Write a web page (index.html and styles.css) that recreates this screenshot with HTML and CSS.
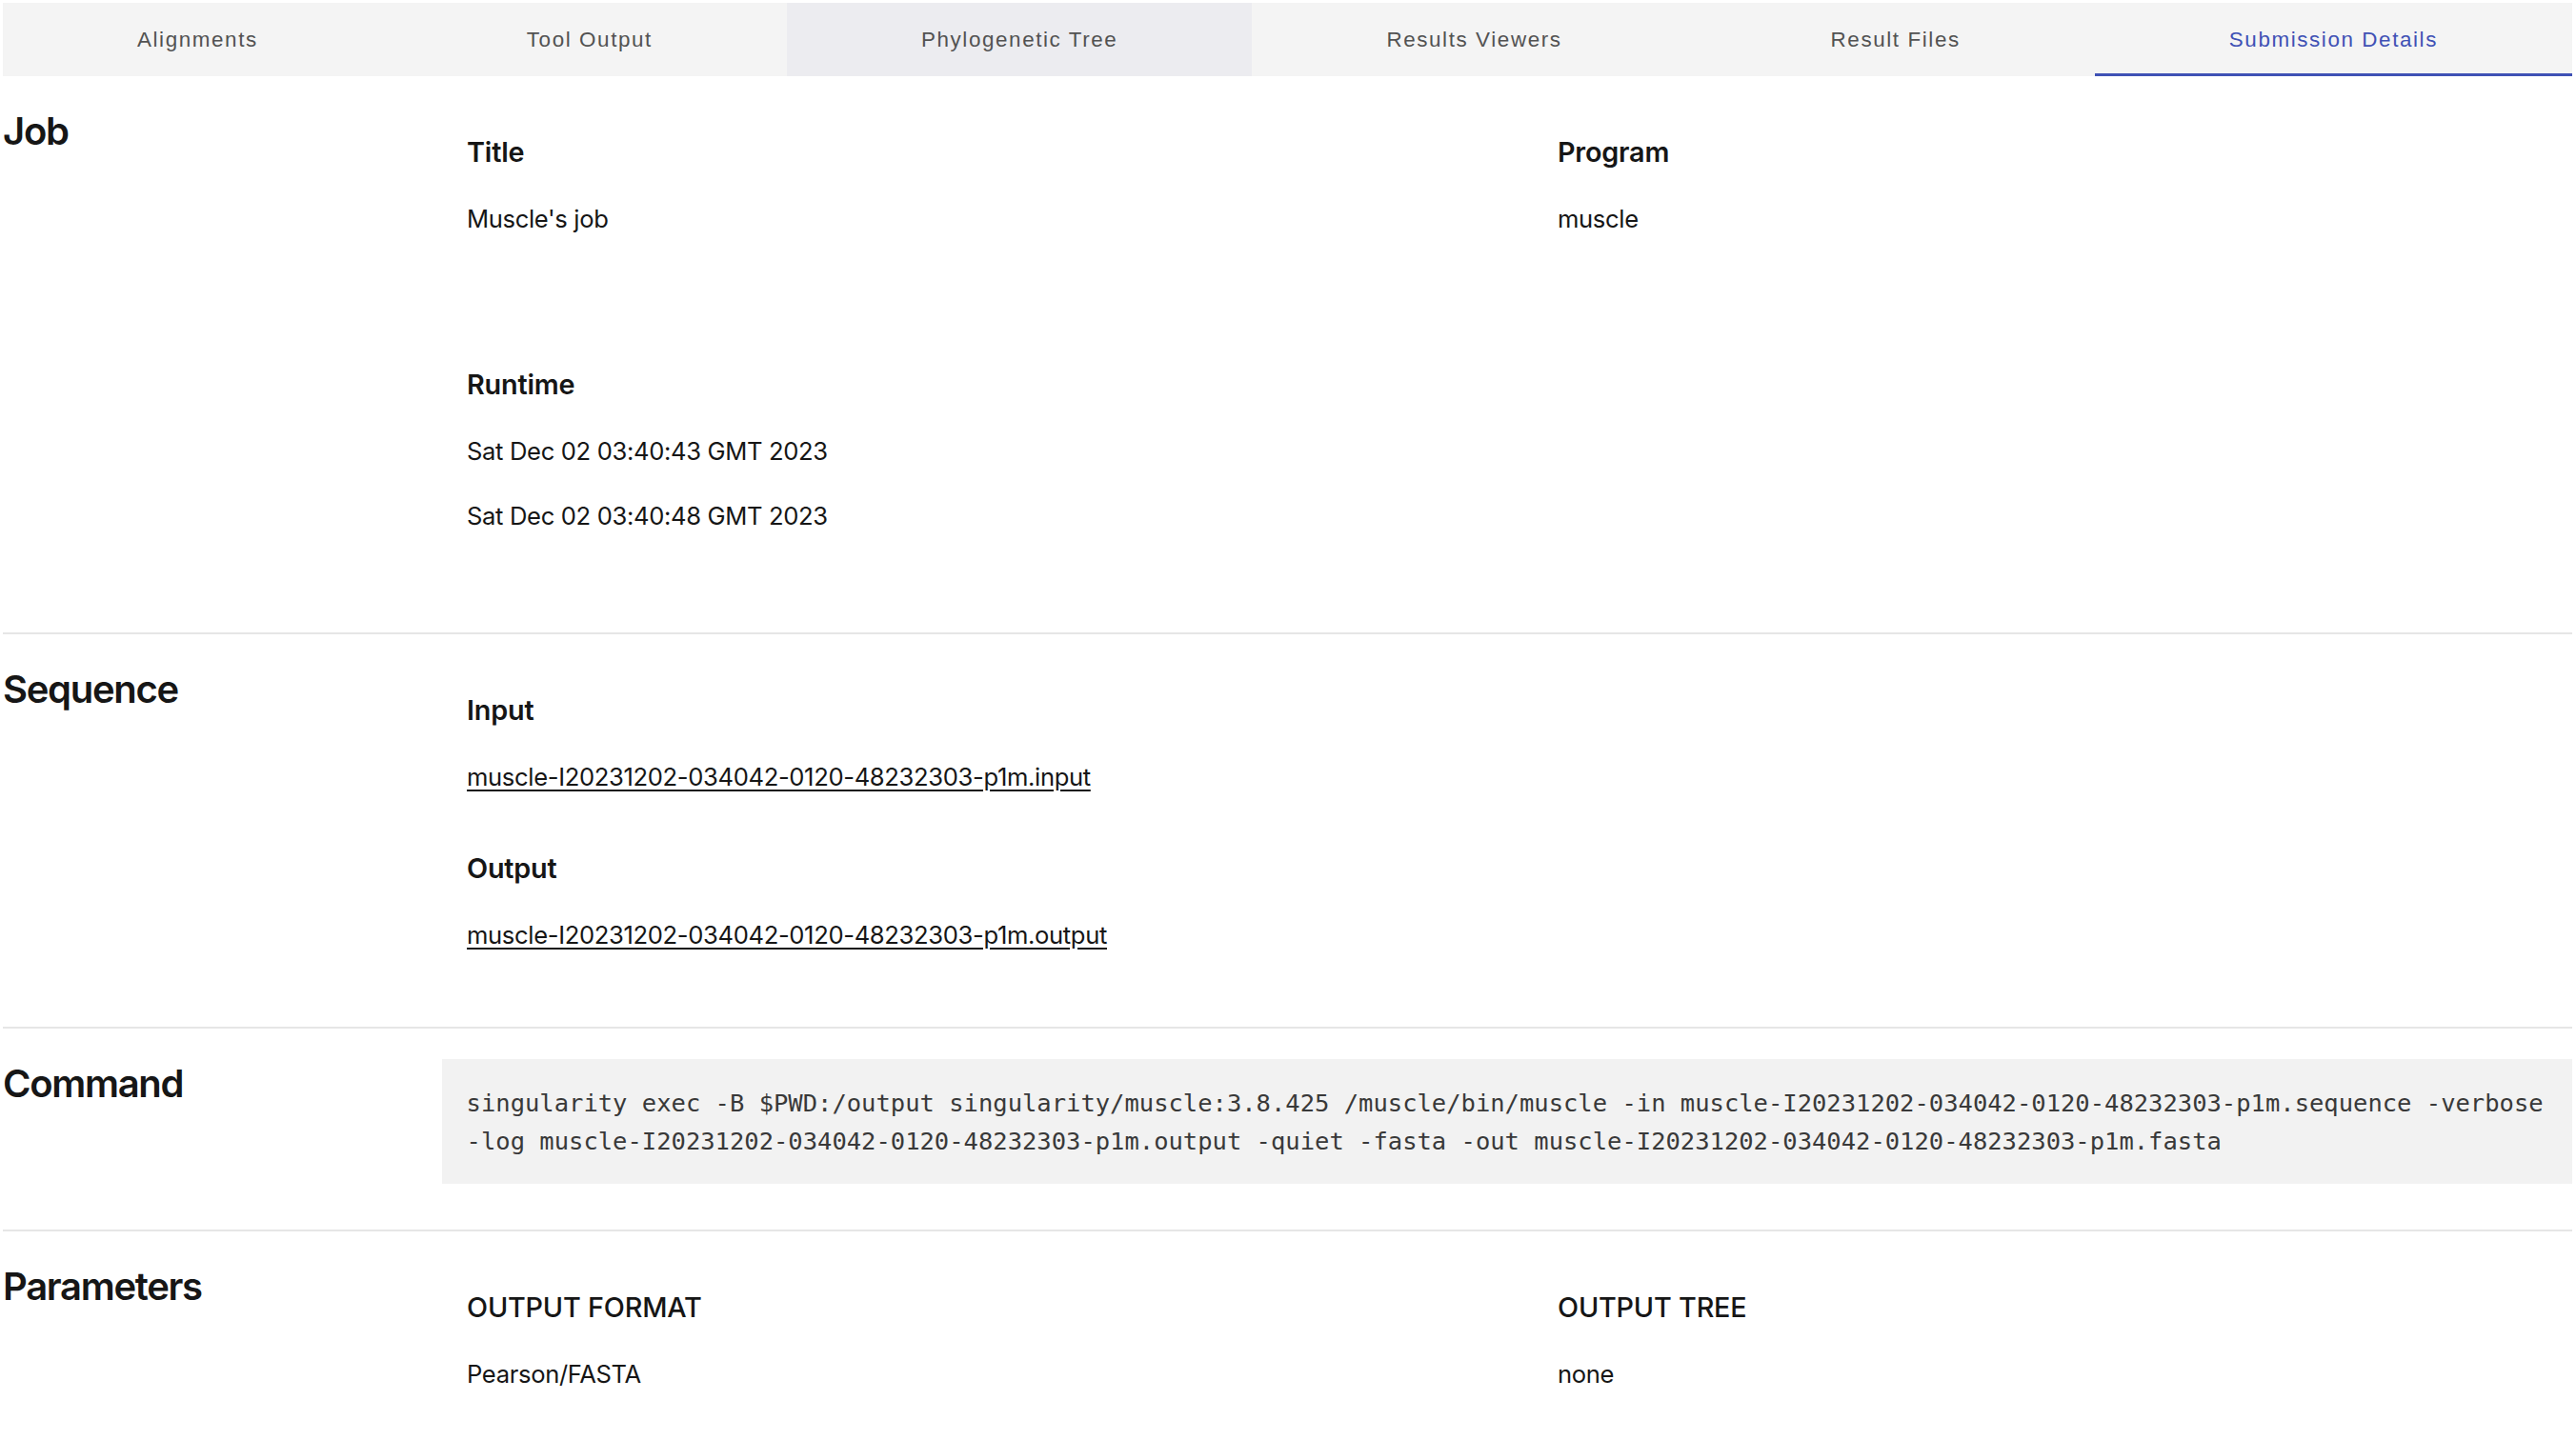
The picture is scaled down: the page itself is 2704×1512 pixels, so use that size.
FILE: index.html
```html
<!DOCTYPE html>
<html lang="en">
<head>
<meta charset="utf-8">
<title>Submission Details</title>
<link rel="stylesheet" href="styles.css">
</head>
<body>
<nav class="tabs">
  <div class="tab">Alignments</div>
  <div class="tab">Tool Output</div>
  <div class="tab tab--hover">Phylogenetic Tree</div>
  <div class="tab">Results Viewers</div>
  <div class="tab">Result Files</div>
  <div class="tab tab--active">Submission Details</div>
</nav>
<main class="details">
  <section class="section section--job">
    <h2 class="section-title">Job</h2>
    <div class="fields fields--job">
      <div class="field">
        <h3 class="field-label">Title</h3>
        <p class="field-value">Muscle's job</p>
      </div>
      <div class="field">
        <h3 class="field-label">Program</h3>
        <p class="field-value">muscle</p>
      </div>
      <div class="field">
        <h3 class="field-label">Runtime</h3>
        <p class="field-value">Sat Dec 02 03:40:43 GMT 2023</p>
        <p class="field-value">Sat Dec 02 03:40:48 GMT 2023</p>
      </div>
    </div>
  </section>
  <section class="section">
    <h2 class="section-title">Sequence</h2>
    <div class="fields">
      <div class="field field--first">
        <h3 class="field-label">Input</h3>
        <p class="field-value"><a class="file-link" href="#">muscle-I20231202-034042-0120-48232303-p1m.input</a></p>
      </div>
      <div class="field field--first">
        <h3 class="field-label">Output</h3>
        <p class="field-value"><a class="file-link" href="#">muscle-I20231202-034042-0120-48232303-p1m.output</a></p>
      </div>
    </div>
  </section>
  <section class="section">
    <h2 class="section-title">Command</h2>
    <pre class="command">singularity exec -B $PWD:/output singularity/muscle:3.8.425 /muscle/bin/muscle -in muscle-I20231202-034042-0120-48232303-p1m.sequence -verbose -log muscle-I20231202-034042-0120-48232303-p1m.output -quiet -fasta -out muscle-I20231202-034042-0120-48232303-p1m.fasta</pre>
  </section>
  <section class="section">
    <h2 class="section-title">Parameters</h2>
    <div class="fields">
      <div class="field">
        <h3 class="field-label field-label--param">OUTPUT FORMAT</h3>
        <p class="field-value">Pearson/FASTA</p>
      </div>
      <div class="field">
        <h3 class="field-label field-label--param">OUTPUT TREE</h3>
        <p class="field-value">none</p>
      </div>
    </div>
  </section>
</main>
</body>
</html>
```
FILE: styles.css
```css
* {
  box-sizing: border-box;
}

html, body {
  background: #ffffff;
}

body {
  margin: 3px 4px 0 3px;
  font-family: Inter, "Noto Sans", Roboto, sans-serif;
  color: #161616;
  overflow: hidden;
}

.tabs {
  display: flex;
  height: 77px;
  background: #f4f4f4;
}

.tab {
  flex: 1 1 auto;
  display: flex;
  align-items: center;
  justify-content: center;
  font-family: "Liberation Sans", Arial, sans-serif;
  font-size: 22.4px;
  letter-spacing: 1.6px;
  color: #525252;
  border-bottom: 3px solid transparent;
  padding-top: 3px;
  white-space: nowrap;
}

.tab--hover {
  background: #ececf0;
}

.tab--active {
  color: #3f51b5;
  border-bottom-color: #3f51b5;
}

.section {
  display: grid;
  grid-template-columns: 461px 1fr;
  padding: 32px 0 48px;
  border-top: 2px solid #e6e6e6;
}

.section--job {
  border-top: none;
  padding-bottom: 74px;
}

.section-title {
  margin: 0;
  font-size: 40px;
  line-height: 52px;
  font-weight: 600;
  color: #161616;
  letter-spacing: -1.3px;
}

.fields {
  display: grid;
  grid-template-columns: 1145px 1fr;
  align-content: start;
}

.fields--job {
  row-gap: 78px;
}

.field {
  padding: 28px 0 0 26px;
}

.field--first {
  grid-column: 1;
}

.field-label {
  margin: 0 0 30px;
  font-size: 28.8px;
  line-height: 40px;
  font-weight: 600;
  color: #161616;
  letter-spacing: -0.2px;
}

.field-label--param {
  font-weight: 500;
}

.field-value {
  margin: 0 0 28px;
  font-size: 25.6px;
  line-height: 40px;
  color: #161616;
  letter-spacing: -0.35px;
}

.file-link {
  color: #161616;
  text-decoration: underline;
  text-underline-offset: 4px;
}

.command {
  margin: 0;
  padding: 25.6px;
  background: #f2f2f2;
  font-family: "DejaVu Sans Mono", "Liberation Mono", monospace;
  font-size: 25.5px;
  line-height: 40px;
  color: #393939;
  white-space: pre-wrap;
  word-break: normal;
}
```
